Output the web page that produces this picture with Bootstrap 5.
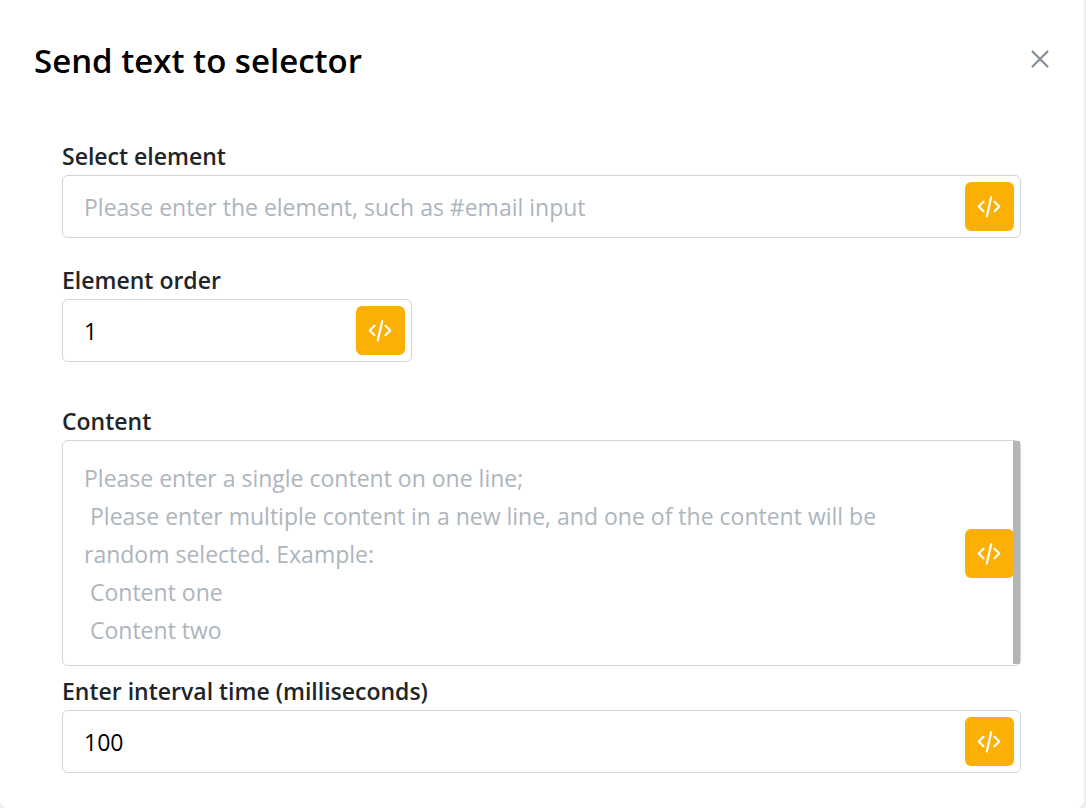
<!DOCTYPE html>
<html lang="en">
<head>
<meta charset="utf-8">
<meta name="viewport" content="width=device-width, initial-scale=1">
<title>Send text to selector</title>
<link href="https://cdn.jsdelivr.net/npm/bootstrap@5.3.0/dist/css/bootstrap.min.css" rel="stylesheet">
<style>
  body { background: #eeeeee; font-family: "Open Sans", "Noto Sans", sans-serif; font-size: 23px; line-height: 38px; }
  .panel { min-height: 100vh; margin-right: 2px; border-radius: 0 0 8px 8px; }
  .panel-head { padding: 32px 32px 0 34px; height: 137px; }
  .panel-title { font-size: 33px; line-height: 58px; font-weight: 600; color: #000; }
  .panel-close { width: 24px; height: 24px; margin-top: 15px; color: #868e96; }
  .panel-body { padding: 0 63px 35px 62px; }
  .form-label { font-weight: 600; color: #212529; display: block; }
  .form-control { font-size: 23px; line-height: 38px; color: #000; border-color: #ced4da; border-radius: 6px; padding: 12px 64px 11px 21px; height: 63px; }
  .form-control::placeholder { color: #adb5bd; opacity: 1; }
  textarea.form-control { height: 226px; padding: 18px 64px 16px 21px; resize: none; overflow-y: auto; scrollbar-width: none; }
  .scroll-strip { top: 1px; bottom: 2px; right: 1px; width: 7px; background: #b5b5b4; }
  .btn-code { width: 49px; height: 49px; right: 7px; bottom: 7px; background: #fcb006; border-radius: 6px; color: #fff; }
  .btn-mid { bottom: 88px; }
  .narrow { max-width: 350px; }
  .gap-s { margin-bottom: 6px; }
  .gap-m { margin-bottom: 23px; }
  .gap-l { margin-bottom: 40px; }
</style>
</head>
<body>
<svg class="d-none" aria-hidden="true">
  <symbol id="code" viewBox="0 0 25 25" fill="none" stroke="currentColor" stroke-width="2.200" stroke-linecap="round" stroke-linejoin="round">
    <path d="M6.500 7.800 1.700 12.500l4.800 4.700M17.500 7.800l4.800 4.700-4.800 4.700M14.200 3 9.800 22.500"/>
  </symbol>
</svg>
<main class="panel bg-white">
  <header class="panel-head d-flex justify-content-between align-items-start">
    <h1 class="panel-title mb-0">Send text to selector</h1>
    <button type="button" class="panel-close btn p-0 border-0 d-flex" aria-label="Close">
      <svg width="24" height="24" viewBox="0 0 24 24" fill="none" stroke="currentColor" stroke-width="2.200" stroke-linecap="round"><path d="M4.500 4.500l15 15M19.500 4.500l-15 15"/></svg>
    </button>
  </header>
  <form class="panel-body">
    <div class="gap-m">
      <label class="form-label mb-0" for="element">Select element</label>
      <div class="position-relative">
        <input class="form-control" id="element" type="text" placeholder="Please enter the element, such as #email input">
        <button type="button" class="btn-code btn p-0 border-0 d-flex align-items-center justify-content-center position-absolute" aria-label="Insert variable"><svg width="25" height="25"><use href="#code"/></svg></button>
      </div>
    </div>
    <div class="gap-l">
      <label class="form-label mb-0" for="order">Element order</label>
      <div class="position-relative narrow">
        <input class="form-control" id="order" type="text" inputmode="numeric" value="1">
        <button type="button" class="btn-code btn p-0 border-0 d-flex align-items-center justify-content-center position-absolute" aria-label="Insert variable"><svg width="25" height="25"><use href="#code"/></svg></button>
      </div>
    </div>
    <div class="gap-s">
      <label class="form-label mb-0" for="content">Content</label>
      <div class="position-relative">
        <textarea class="form-control d-block" id="content" placeholder="Please enter a single content on one line;&#10; Please enter multiple content in a new line, and one of the content will be random selected. Example:&#10; Content one&#10; Content two"></textarea>
        <div class="scroll-strip position-absolute" aria-hidden="true"></div>
        <button type="button" class="btn-code btn-mid btn p-0 border-0 d-flex align-items-center justify-content-center position-absolute" aria-label="Insert variable"><svg width="25" height="25"><use href="#code"/></svg></button>
      </div>
    </div>
    <div>
      <label class="form-label mb-0" for="interval">Enter interval time (milliseconds)</label>
      <div class="position-relative">
        <input class="form-control" id="interval" type="text" inputmode="numeric" value="100">
        <button type="button" class="btn-code btn p-0 border-0 d-flex align-items-center justify-content-center position-absolute" aria-label="Insert variable"><svg width="25" height="25"><use href="#code"/></svg></button>
      </div>
    </div>
  </form>
</main>
<script src="https://cdn.jsdelivr.net/npm/bootstrap@5.3.0/dist/js/bootstrap.bundle.min.js"></script>
</body>
</html>
